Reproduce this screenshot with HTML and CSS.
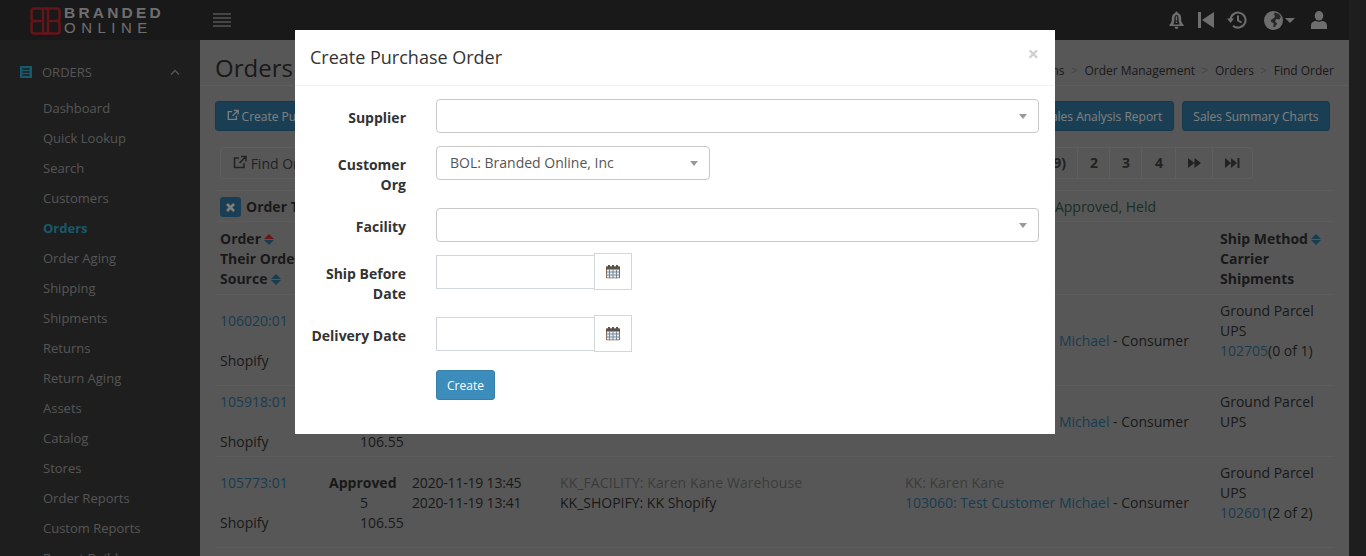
FILE: index.html
```html
<!DOCTYPE html>
<html lang="en">
<head>
    <meta charset="UTF-8">
    <title>Find Order</title>
    <link rel="stylesheet" href="styles.css">
</head>
<body>

<!-- Top bar -->
<header class="topbar">
    <div class="logo">
        <svg class="logo-mark" width="31" height="28" viewBox="0 0 31 28" fill="none" stroke="#c82a34" stroke-width="2.600">
            <path d="M17 1.500H4A2.500 2.500 0 0 0 1.500 4V11.500A2.500 2.500 0 0 0 4 14H13M13 1.500V26.500M17 26.500H4A2.500 2.500 0 0 1 1.500 24V16.500A2.500 2.500 0 0 1 4 14"/>
            <path d="M14 1.500H27A2.500 2.500 0 0 1 29.500 4V11.500A2.500 2.500 0 0 1 27 14H18M18 1.500V26.500M14 26.500H27A2.500 2.500 0 0 0 29.500 24V16.500A2.500 2.500 0 0 0 27 14"/>
        </svg>
        <div class="logo-text">
            <div class="logo-top">BRANDED</div>
            <div class="logo-bottom">ONLINE</div>
        </div>
    </div>
    <svg class="menu-toggle" width="18" height="14" viewBox="0 0 18 14" fill="#8a8a8a">
        <rect y="0" width="18" height="2"/><rect y="4" width="18" height="2"/><rect y="8" width="18" height="2"/><rect y="12" width="18" height="2"/>
    </svg>
    <div class="top-icons">
        <svg class="icon-bell" width="15" height="19" viewBox="0 0 16 19" fill="#ddd">
            <path d="M8 0a1.300 1.300 0 0 1 1.300 1.600C12 2.300 13 4.500 13 7.500c0 3 .6 4.700 2.500 6.500v1.300H.5V14C2.400 12.200 3 10.500 3 7.500c0-3 1-5.200 3.700-5.900A1.300 1.300 0 0 1 8 0zM4.500 13.800h7C10.500 12 10.200 10 10.200 7.500c0-2.200-.8-4-2.200-4s-2.200 1.800-2.200 4c0 2.500-.3 4.500-1.300 6.300zM6 16.200h4A2 2 0 0 1 8 18.500a2 2 0 0 1-2-2.300z"/>
            <rect x="7.200" y="5" width="1.600" height="4.500"/><rect x="7.200" y="10.500" width="1.600" height="1.600"/>
        </svg>
        <svg class="icon-back" width="16" height="16" viewBox="0 0 16 16" fill="#ddd">
            <rect width="3" height="16"/><path d="M16 0V16L4 8z"/>
        </svg>
        <svg class="icon-history" width="20" height="18" viewBox="0 0 20 18" fill="none" stroke="#ddd" stroke-width="2">
            <path d="M3.500 9a7.500 7.500 0 1 1 2.500 5.700"/>
            <path d="M0 7.500h7L3.500 12z" fill="#ddd" stroke="none"/>
            <path d="M11 4.500V9.500L14.500 11.500"/>
        </svg>
        <svg class="icon-globe" width="19" height="19" viewBox="0 0 18 18">
            <circle cx="9" cy="9" r="9" fill="#ddd"/>
            <path d="M10 1.500l4 1 2 3-1.500 2.500-3-.5-1 2.500 2 2-2.500 3.500-1.200-.3.400-3.500-2.700-1.500.3-2 2.700-1.500 1-2-1-1.500z" fill="#505050"/>
        </svg>
        <span class="caret-down"></span>
        <svg class="icon-user" width="16" height="18" viewBox="0 0 16 18" fill="#ddd">
            <ellipse cx="8" cy="4.800" rx="4.300" ry="4.800"/>
            <path d="M0 18v-3.500C0 11.500 2.500 10 5 10c1.800 1 4.200 1 6 0 2.500 0 5 1.500 5 4.500V18z"/>
        </svg>
    </div>
</header>

<div class="layout">
    <!-- Sidebar -->
    <nav class="sidebar">
        <div class="side-head">
            <svg width="12" height="12" viewBox="0 0 12 12">
                <rect width="12" height="12" fill="#2fb2d6"/>
                <path d="M2.500 3h7M2.500 6h7M2.500 9h7" stroke="#3c3c3c" stroke-width="1.300"/>
            </svg>
            <span class="side-title">ORDERS</span>
            <svg class="side-chevron" width="10" height="6" viewBox="0 0 10 6" fill="none" stroke="#aaa" stroke-width="1.400">
                <path d="M1 5.500L5 1.500L9 5.500"/>
            </svg>
        </div>
        <a class="side-link">Dashboard</a>
        <a class="side-link">Quick Lookup</a>
        <a class="side-link">Search</a>
        <a class="side-link">Customers</a>
        <a class="side-link active">Orders</a>
        <a class="side-link">Order Aging</a>
        <a class="side-link">Shipping</a>
        <a class="side-link">Shipments</a>
        <a class="side-link">Returns</a>
        <a class="side-link">Return Aging</a>
        <a class="side-link">Assets</a>
        <a class="side-link">Catalog</a>
        <a class="side-link">Stores</a>
        <a class="side-link">Order Reports</a>
        <a class="side-link">Custom Reports</a>
        <a class="side-link">Report Builder</a>
    </nav>

    <!-- Main content -->
    <main class="content">
        <div class="page-head">
            <h1>Orders</h1>
            <div class="breadcrumb">
                <span>Operations</span><i>&gt;</i><span>Order Management</span><i>&gt;</i><span>Orders</span><i>&gt;</i><span>Find Order</span>
            </div>
        </div>

        <div class="action-row">
            <button class="btn">
                <svg class="icon-ext" width="12" height="12" viewBox="0 0 14 14" fill="none" stroke="currentColor" stroke-width="1.500"><path d="M11 8v4H1.500V3H6M8 1.500h5v5M13 1.500L6.500 8"/></svg>
                Create Purchase Order
            </button>
            <div class="action-right">
                <button class="btn">Sales Analysis Report</button>
                <button class="btn">Sales Summary Charts</button>
            </div>
        </div>

        <div class="tool-row">
            <button class="btn-plain">
                <svg class="icon-ext" width="14" height="14" viewBox="0 0 14 14" fill="none" stroke="currentColor" stroke-width="1.500"><path d="M11 8v4.500H1.500V3H6M8 1.500h5v5M13 1.500L6.500 8"/></svg>
                Find Orders
            </button>
            <div class="pager">
                <span class="page-cell page-one">1 (of 9)</span>
                <span class="page-cell">2</span>
                <span class="page-cell">3</span>
                <span class="page-cell page-four">4</span>
                <span class="page-cell page-next">
                    <svg width="13" height="10" viewBox="0 0 13 10" fill="currentColor"><path d="M0 0L6.500 5L0 10zM6.500 0L13 5L6.500 10z"/></svg>
                </span>
                <span class="page-cell page-last">
                    <svg width="15" height="10" viewBox="0 0 15 10" fill="currentColor"><path d="M0 0L6 5L0 10zM6 0L12 5L6 10z"/><rect x="12.500" width="2" height="10"/></svg>
                </span>
            </div>
        </div>

        <div class="filter-row">
            <span class="filter-x">
                <svg width="9" height="9" viewBox="0 0 9 9" stroke="#fff" stroke-width="2.600"><path d="M1 1L8 8M8 1L1 8"/></svg>
            </span>
            <strong>Order Type</strong>
            <span class="filter-values">Approved, Held</span>
        </div>

        <table class="orders">
            <colgroup>
                <col class="col-order"><col class="col-status"><col class="col-date">
                <col class="col-facility"><col class="col-customer"><col class="col-ship">
            </colgroup>
            <thead>
                <tr>
                    <th>Order <span class="sort sorted"></span><br>Their Order<br>Source <span class="sort"></span></th>
                    <th></th>
                    <th></th>
                    <th></th>
                    <th></th>
                    <th>Ship Method <span class="sort"></span><br>Carrier<br>Shipments</th>
                </tr>
            </thead>
            <tbody>
                <tr>
                    <td><a>106020:01</a><br><br>Shopify</td>
                    <td class="status"><strong>Approved</strong><div class="num">5</div><div class="num">106.55</div></td>
                    <td class="date">2020-11-20 10:12<br>2020-11-20 10:09<br><br></td>
                    <td><span class="muted facility">KK_FACILITY: Karen Kane Warehouse</span><br>KK_SHOPIFY: KK Shopify<br><br></td>
                    <td><span class="muted">KK: Karen Kane</span><br><a>103060: Test Customer Michael</a> - Consumer<br><br></td>
                    <td>Ground Parcel<br>UPS<br><a>102705</a>(0 of 1)<br><br></td>
                </tr>
                <tr>
                    <td><a>105918:01</a><br><br>Shopify</td>
                    <td class="status"><strong>Approved</strong><div class="num">5</div><div class="num">106.55</div></td>
                    <td class="date">2020-11-19 16:30<br>2020-11-19 16:28<br><br></td>
                    <td><span class="muted facility">KK_FACILITY: Karen Kane Warehouse</span><br>KK_SHOPIFY: KK Shopify<br><br></td>
                    <td><span class="muted">KK: Karen Kane</span><br><a>103060: Test Customer Michael</a> - Consumer<br><br></td>
                    <td>Ground Parcel<br>UPS<br><br></td>
                </tr>
                <tr>
                    <td><a>105773:01</a><br><br>Shopify</td>
                    <td class="status"><strong>Approved</strong><div class="num">5</div><div class="num">106.55</div></td>
                    <td class="date">2020-11-19 13:45<br>2020-11-19 13:41<br><br></td>
                    <td><span class="muted facility">KK_FACILITY: Karen Kane Warehouse</span><br>KK_SHOPIFY: KK Shopify<br><br></td>
                    <td><span class="muted">KK: Karen Kane</span><br><a>103060: Test Customer Michael</a> - Consumer<br><br></td>
                    <td>Ground Parcel<br>UPS<br><a>102601</a>(2 of 2)<br><br></td>
                </tr>
            </tbody>
        </table>
    </main>
</div>

<!-- Modal -->
<div class="backdrop"></div>
<div class="modal">
    <div class="modal-head">
        <h4>Create Purchase Order</h4>
        <span class="modal-close">&times;</span>
    </div>
    <form class="modal-body">
        <div class="form-row">
            <label>Supplier</label>
            <div class="select"><span class="select-text"></span><b class="select-arrow"></b></div>
        </div>
        <div class="form-row">
            <label>Customer Org</label>
            <div class="select select-short"><span class="select-text">BOL: Branded Online, Inc</span><b class="select-arrow"></b></div>
        </div>
        <div class="form-row">
            <label>Facility</label>
            <div class="select"><span class="select-text"></span><b class="select-arrow"></b></div>
        </div>
        <div class="form-row">
            <label>Ship Before Date</label>
            <div class="date-group">
                <input type="text" class="date-input">
                <span class="date-addon">
                    <svg width="14" height="15" viewBox="0 0 14 14"><use href="#calendar"/></svg>
                </span>
            </div>
        </div>
        <div class="form-row">
            <label>Delivery Date</label>
            <div class="date-group">
                <input type="text" class="date-input">
                <span class="date-addon">
                    <svg width="14" height="15" viewBox="0 0 14 14"><use href="#calendar"/></svg>
                </span>
            </div>
        </div>
        <div class="form-row form-submit">
            <span></span>
            <div><button type="button" class="btn-create">Create</button></div>
        </div>
    </form>
</div>

<svg class="defs" width="0" height="0">
    <symbol id="calendar" viewBox="0 0 14 14">
        <path d="M.5 2.500h13v11H.5z" fill="#e8eef4" stroke="#8a6a4a"/>
        <path d="M0 2h14v3H0z" fill="#5a5148"/>
        <path d="M3 .5v3M7 .5v3M11 .5v3" stroke="#5a5148" stroke-width="2"/>
        <path d="M0 7.500h14M0 10.500h14M3.500 5v9M7 5v9M10.500 5v9" stroke="#6f7f90" stroke-width=".9"/>
    </symbol>
</svg>

</body>
</html>
```

FILE: styles.css
```css
* {
    box-sizing: border-box;
}
html, body {
    height: 100%;
}
body {
    margin: 0;
    height: 556px;
    overflow: hidden;
    font-family: 'Open Sans', 'DejaVu Sans', sans-serif;
    font-size: 14px;
    line-height: 20px;
    color: #333;
    background-color: #3c3c3c;
}

/* Top bar */
.topbar {
    display: flex;
    align-items: center;
    height: 40px;
    width: 1349px;
    background-color: #323232;
}
.logo {
    display: flex;
    align-items: center;
    width: 213px;
    padding-left: 30px;
    gap: 3px;
}
.logo-mark {
    margin-top: 1px;
}
.logo-text {
    color: #ddd;
}
.logo-top {
    font-family: 'Liberation Sans', sans-serif;
    font-weight: bold;
    font-size: 15.500px;
    line-height: 15px;
    letter-spacing: 3.200px;
}
.logo-bottom {
    font-family: 'Liberation Sans', sans-serif;
    font-size: 15px;
    line-height: 15px;
    letter-spacing: 5.500px;
}
.top-icons {
    display: flex;
    align-items: center;
    margin-left: auto;
    padding-right: 22px;
}
.icon-back {
    margin-left: 14px;
}
.icon-history {
    margin-left: 13px;
}
.icon-globe {
    margin-left: 17px;
}
.caret-down {
    width: 0;
    height: 0;
    margin-left: 2px;
    border-left: 5px solid transparent;
    border-right: 5px solid transparent;
    border-top: 5px solid #ddd;
}
.icon-user {
    margin-left: 16px;
}

/* Sidebar */
.layout {
    display: flex;
    width: 1349px;
    height: 516px;
}
.sidebar {
    flex: 0 0 200px;
    overflow: hidden;
    font-size: 13px;
    color: #aaa;
}
.side-head {
    display: flex;
    align-items: center;
    height: 30px;
    margin-top: 17px;
    padding: 0 20px;
    gap: 10px;
}
.side-chevron {
    margin-left: auto;
}
.side-link {
    display: block;
    height: 30px;
    line-height: 30px;
    padding-left: 43px;
}
.side-link:first-of-type {
    margin-top: 6px;
}
.side-link.active {
    font-weight: bold;
    color: #2fb2d6;
}

/* Main content */
.content {
    flex: 1;
    padding: 0 15px;
    overflow: hidden;
    background-color: #afafaf;
}
.page-head {
    display: flex;
    justify-content: space-between;
    height: 46px;
    padding-top: 10px;
    margin: 0 -15px;
    padding-left: 15px;
    padding-right: 15px;
    border-bottom: 1px solid #bcbcbc;
}
.page-head h1 {
    margin: 0;
    font-size: 24px;
    font-weight: 400;
    line-height: 36px;
}
.breadcrumb {
    padding-top: 11px;
    font-size: 12px;
}
.breadcrumb i {
    margin: 0 6.500px;
    font-style: normal;
    color: #888;
}
.action-row {
    display: flex;
    margin-top: 15px;
}
.action-right {
    display: flex;
    gap: 8px;
    margin-left: auto;
    margin-right: 4px;
}
.btn {
    height: 30px;
    padding: 0 10.500px;
    font-family: inherit;
    font-size: 12px;
    color: #fff;
    background-color: #357ea8;
    border: 1px solid #30739a;
    border-radius: 3px;
}
.tool-row {
    display: flex;
    margin-top: 16px;
    padding-left: 5px;
}
.btn-plain {
    height: 32px;
    padding: 0 12px;
    font-family: inherit;
    font-size: 14px;
    color: #444;
    background: transparent;
    border: 1px solid #bdbdbd;
    border-radius: 4px;
}
.pager {
    display: flex;
    margin-left: auto;
    margin-right: 81px;
    border: 1px solid #bdbdbd;
    border-radius: 4px;
    font-weight: bold;
    color: #444;
}
.page-cell {
    display: flex;
    align-items: center;
    justify-content: center;
    width: 32px;
    height: 30px;
    padding-left: 1px;
    border-left: 1px solid #bdbdbd;
}
.page-one {
    width: 70px;
    border-left: none;
}
.page-four {
    width: 34px;
}
.page-next {
    width: 37px;
    padding-left: 0;
}
.page-last {
    width: 40px;
    padding-left: 0;
}
.filter-row {
    display: flex;
    align-items: center;
    height: 32px;
    margin-top: 11px;
    padding-left: 5px;
    padding-top: 2px;
    border-top: 1px solid #b8b8b8;
    border-bottom: 1px solid #b8b8b8;
}
.filter-x {
    display: flex;
    align-items: center;
    justify-content: center;
    width: 21px;
    height: 20px;
    margin-right: 5px;
    background-color: #357ea8;
    border-radius: 3px;
}
.filter-values {
    margin-left: auto;
    margin-right: 178px;
    color: #2e5e50;
}

/* Orders table */
.orders {
    width: 1119px;
    table-layout: fixed;
    border-collapse: collapse;
}
.col-order { width: 110px; }
.col-status { width: 82px; }
.col-date { width: 148px; }
.col-facility { width: 345px; }
.col-customer { width: 315px; }
.col-ship { width: 119px; }
.orders th,
.orders td {
    padding: 6px 5px 4px;
    text-align: left;
    vertical-align: middle;
    border-bottom: 1px solid #b8b8b8;
    white-space: nowrap;
}
.orders th {
    padding: 7px 5px 5px;
}
.orders a {
    color: #34789f;
}
.orders td.status {
    padding-left: 4px;
}
.orders td.date {
    letter-spacing: -0.190px;
}
.num {
    padding-left: 31px;
}
.muted {
    color: #777;
}
.facility {
    letter-spacing: 0.090px;
}
.sort {
    display: inline-block;
    position: relative;
    width: 10px;
    height: 11px;
    margin-left: -0.500px;
    vertical-align: -1px;
}
.sort::before,
.sort::after {
    content: "";
    position: absolute;
    left: 0;
    border-left: 5px solid transparent;
    border-right: 5px solid transparent;
}
.sort::before {
    top: 0;
    border-bottom: 5px solid #34789f;
}
.sort::after {
    bottom: 0;
    border-top: 5px solid #34789f;
}
.sort.sorted::before {
    border-bottom-color: #d42a2a;
}

/* Modal */
.backdrop {
    position: fixed;
    top: 0;
    left: 0;
    right: 0;
    bottom: 0;
    background-color: rgba(0, 0, 0, 0.5);
}
.modal {
    position: absolute;
    top: 30px;
    left: 295px;
    width: 760px;
    background-color: #fff;
}
.modal-head {
    display: flex;
    align-items: center;
    justify-content: space-between;
    height: 56px;
    padding: 0 15px 2px;
    border-bottom: 1px solid #f4f4f4;
}
.modal-head h4 {
    margin: 0;
    font-size: 18px;
    font-weight: 400;
    color: #333;
}
.modal-close {
    font-size: 20px;
    font-weight: bold;
    color: #d0d0d0;
    margin-top: -6px;
    margin-right: 1px;
}
.modal-body {
    padding: 13px 16px 34px 15px;
}
.form-row {
    display: grid;
    grid-template-columns: 96px 1fr;
    column-gap: 30px;
    margin-bottom: 13px;
}
.form-row label {
    padding-top: 9px;
    font-weight: bold;
    text-align: right;
}
.select {
    display: flex;
    align-items: center;
    justify-content: space-between;
    height: 34px;
    padding: 0 11px 0 13px;
    color: #555;
    border: 1px solid #c8c8c8;
    border-radius: 4px;
}
.select-short {
    width: 274px;
}
.select-arrow {
    width: 0;
    height: 0;
    margin-left: auto;
    border-left: 4px solid transparent;
    border-right: 4px solid transparent;
    border-top: 5px solid #999;
}
.date-group {
    display: flex;
    align-items: flex-start;
}
.date-input {
    width: 158px;
    height: 34px;
    border: 1px solid #d2d6de;
    border-right: none;
}
.date-addon {
    display: flex;
    align-items: center;
    justify-content: center;
    width: 38px;
    height: 37px;
    margin-top: -2px;
    border: 1px solid #d2d6de;
}
.form-submit {
    margin: 18px 0 0;
}
.btn-create {
    display: block;
    width: 59px;
    height: 30px;
    padding: 0;
    font-family: inherit;
    font-size: 12px;
    color: #fff;
    background-color: #3c8dbc;
    border: 1px solid #367fa9;
    border-radius: 3px;
}
.defs {
    position: absolute;
}
```
